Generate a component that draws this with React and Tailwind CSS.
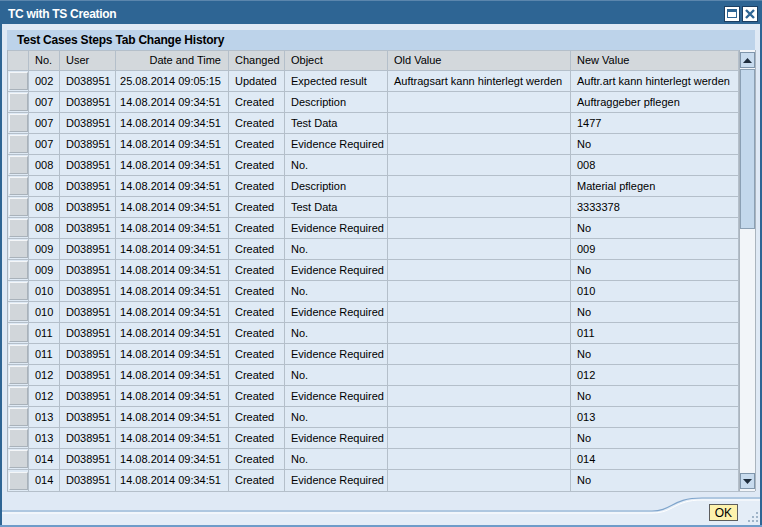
import React from "react";

const rows = [
  ["002", "D038951", "25.08.2014 09:05:15", "Updated", "Expected result", "Auftragsart kann hinterlegt werden", "Auftr.art kann hinterlegt werden"],
  ["007", "D038951", "14.08.2014 09:34:51", "Created", "Description", "", "Auftraggeber pflegen"],
  ["007", "D038951", "14.08.2014 09:34:51", "Created", "Test Data", "", "1477"],
  ["007", "D038951", "14.08.2014 09:34:51", "Created", "Evidence Required", "", "No"],
  ["008", "D038951", "14.08.2014 09:34:51", "Created", "No.", "", "008"],
  ["008", "D038951", "14.08.2014 09:34:51", "Created", "Description", "", "Material pflegen"],
  ["008", "D038951", "14.08.2014 09:34:51", "Created", "Test Data", "", "3333378"],
  ["008", "D038951", "14.08.2014 09:34:51", "Created", "Evidence Required", "", "No"],
  ["009", "D038951", "14.08.2014 09:34:51", "Created", "No.", "", "009"],
  ["009", "D038951", "14.08.2014 09:34:51", "Created", "Evidence Required", "", "No"],
  ["010", "D038951", "14.08.2014 09:34:51", "Created", "No.", "", "010"],
  ["010", "D038951", "14.08.2014 09:34:51", "Created", "Evidence Required", "", "No"],
  ["011", "D038951", "14.08.2014 09:34:51", "Created", "No.", "", "011"],
  ["011", "D038951", "14.08.2014 09:34:51", "Created", "Evidence Required", "", "No"],
  ["012", "D038951", "14.08.2014 09:34:51", "Created", "No.", "", "012"],
  ["012", "D038951", "14.08.2014 09:34:51", "Created", "Evidence Required", "", "No"],
  ["013", "D038951", "14.08.2014 09:34:51", "Created", "No.", "", "013"],
  ["013", "D038951", "14.08.2014 09:34:51", "Created", "Evidence Required", "", "No"],
  ["014", "D038951", "14.08.2014 09:34:51", "Created", "No.", "", "014"],
  ["014", "D038951", "14.08.2014 09:34:51", "Created", "Evidence Required", "", "No"],
];

// widths of the data columns, after the row selector
const cols = [
  { label: "No.", w: "w-[31px]", align: "justify-start pl-[6px]" },
  { label: "User", w: "w-[56px]", align: "justify-start pl-[6px]" },
  { label: "Date and Time", w: "w-[113px]", align: "justify-end pr-[7px]" },
  { label: "Changed", w: "w-[56px]", align: "justify-start pl-[6px]" },
  { label: "Object", w: "w-[103px]", align: "justify-start pl-[6px]" },
  { label: "Old Value", w: "w-[183px]", align: "justify-start pl-[6px]" },
  { label: "New Value", w: "w-[168px]", align: "justify-start pl-[6px]" },
];

function Selector() {
  return (
    <div className="w-[21px] h-full flex items-center justify-center border-r border-[#b4bfca]">
      <div className="w-[19px] h-[18px] bg-[#d1d6da] border-t border-l border-[#f4f6f8] border-r border-b border-r-[#a9b2ba] border-b-[#a9b2ba]" />
    </div>
  );
}

function ScrollBar() {
  return (
    <div className="w-[17px] flex flex-col bg-[#f2f5f9] border-l border-r border-[#aab4be] pt-[2px] pb-[2px] items-center">
      <div className="w-[15px] h-[16px] bg-[#c8dbee] border border-[#7f95ab] flex items-center justify-center">
        <svg width="9" height="5" viewBox="0 0 9 5">
          <path d="M4.5 0 L9 5 L0 5 Z" fill="#1e2c3c" />
        </svg>
      </div>
      <div className="w-[15px] h-[160px] mt-[1px] bg-[#c3d8ec] border border-[#8ba0b4]" />
      <div className="flex-1" />
      <div className="w-[15px] h-[16px] bg-[#c8dbee] border border-[#7f95ab] flex items-center justify-center">
        <svg width="9" height="5" viewBox="0 0 9 5">
          <path d="M0 0 L9 0 L4.5 5 Z" fill="#1e2c3c" />
        </svg>
      </div>
    </div>
  );
}

export default function App() {
  return (
    <div
      className="w-[762px] h-[527px] flex flex-col bg-[#dfe9f5] text-black text-[11px] overflow-hidden"
      style={{ fontFamily: '"Liberation Sans", Arial, sans-serif' }}
    >
      {/* window title */}
      <div className="h-[24px] bg-[#2e6594] border-t border-[#5b86ad] flex items-center justify-between pl-[8px] pr-[4px] pt-[2px]">
        <span className="text-white font-bold text-[12px] tracking-[-0.3px]">TC with TS Creation</span>
        <div className="flex gap-[2px]">
          <div className="w-[16px] h-[16px] bg-white border border-[#1c3f63] flex items-center justify-center">
            <div className="w-[10px] h-[9px] border border-[#2e6594] border-t-[3px]" />
          </div>
          <div className="w-[16px] h-[16px] bg-white border border-[#1c3f63] flex items-center justify-center">
            <svg width="10" height="10" viewBox="0 0 10 10">
              <path d="M1 1 L9 9 M9 1 L1 9" stroke="#2e6594" strokeWidth="2.4" />
            </svg>
          </div>
        </div>
      </div>

      {/* body */}
      <div className="flex-1 flex flex-col border-l-2 border-r-2 border-[#2e6594] px-[5px] pt-[6px]">
        <div className="flex flex-col">
          <div className="h-[20px] bg-[#bdd3ea] flex items-center pl-[10px] font-bold text-[12px] tracking-[-0.2px]">
            Test Cases Steps Tab Change History
          </div>
          <div className="flex border-b border-[#b4bfca]">
            <div className="flex flex-col border-l border-[#aab4be]">
              <div className="h-[21px] flex bg-[#d3d8dc] border-b border-t border-[#b4bfca]">
                <div className="w-[21px] border-r border-[#b4bfca]" />
                {cols.map((c) => (
                  <div key={c.label} className={`${c.w} flex items-center border-r border-[#b4bfca] ${c.align}`}>
                    {c.label}
                  </div>
                ))}
              </div>
              {rows.map((r, i) => (
                <div key={i} className="h-[21px] flex bg-[#dfeaf5] border-b border-[#b4bfca] last:border-b-0">
                  <Selector />
                  {cols.map((c, j) => (
                    <div
                      key={j}
                      className={`${c.w} flex items-center whitespace-nowrap overflow-hidden border-r border-[#b4bfca] ${c.align}`}
                    >
                      {r[j]}
                    </div>
                  ))}
                </div>
              ))}
            </div>
            <ScrollBar />
          </div>
        </div>
      </div>

      {/* footer */}
      <div className="h-[33px] relative border-l-2 border-r-2 border-[#2e6594] flex items-end justify-end pr-[22px] pb-[4px]">
        <svg className="absolute left-0 top-0" width="758" height="33" viewBox="0 0 758 33">
          <path d="M0 20 L650 20 C670 20 670 7 700 7 L758 7 L758 33 L0 33 Z" fill="#e4edf7" />
          <path d="M0 19 L650 19 C670 19 670 6 700 6 L758 6" fill="none" stroke="#7fa5cc" strokeWidth="1.2" />
          <path d="M0 21 L650 21 C672 21 672 8 700 8 L758 8" fill="none" stroke="#ffffff" strokeWidth="1" />
          {[[746, 28], [750, 24], [750, 28], [754, 20], [754, 24], [754, 28]].map(([x, y], k) => (
            <rect key={k} x={x} y={y} width="2" height="2" fill="#9fb4c8" />
          ))}
        </svg>
        <div className="relative h-[17px] px-[5px] bg-[#fdf2ad] border border-[#5d5d5d] flex items-center text-[12px] leading-none">
          OK
        </div>
      </div>
      <div className="h-[2px] bg-[#6f9cc9]" />
    </div>
  );
}
